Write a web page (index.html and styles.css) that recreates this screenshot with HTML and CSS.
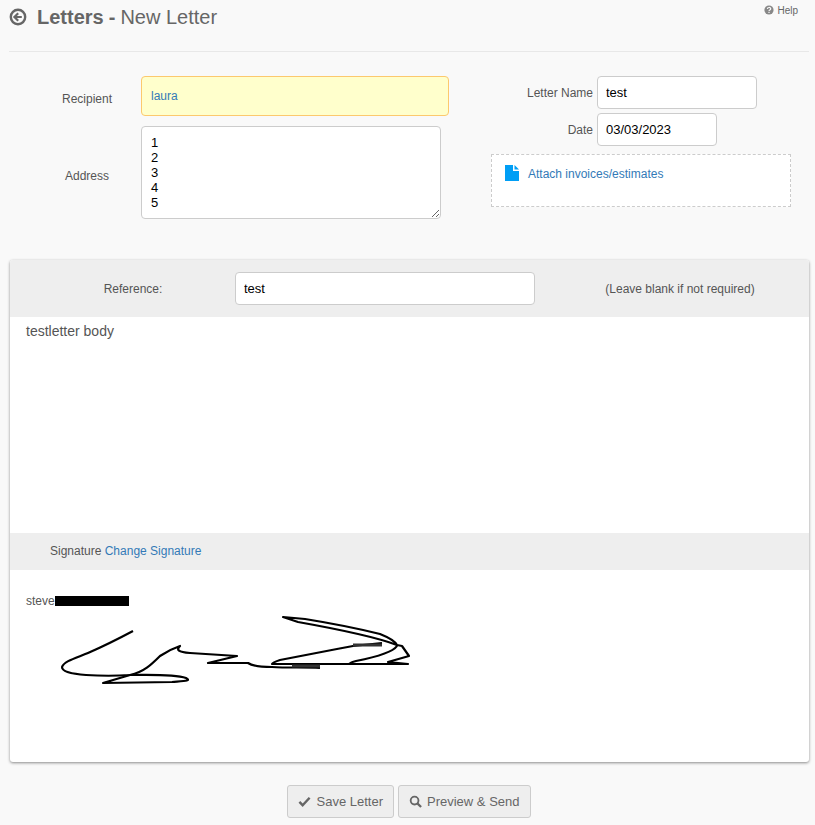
FILE: index.html
```html
<!DOCTYPE html>
<html lang="en">
<head>
    <meta charset="UTF-8">
    <title>Letters - New Letter</title>
    <link rel="stylesheet" href="styles.css">
</head>
<body>
    <div class="page">
        <header class="page-head">
            <h1 class="title">
                <svg class="back-icon" viewBox="0 0 18 18">
                    <circle cx="9" cy="9" r="7.2" fill="none" stroke="#666" stroke-width="2.4"/>
                    <path d="M9.2 5.2 5.4 9l3.8 3.8M5.8 9h7" fill="none" stroke="#666" stroke-width="2.2"/>
                </svg>
                <strong>Letters</strong> <b class="dash">-</b> New Letter
            </h1>
            <a class="help" href="#">
                <svg class="help-icon" viewBox="0 0 10 10">
                    <circle cx="5" cy="5" r="4.6" fill="#888"/>
                    <path d="M3.4 4c0-2 3.3-2 3.3-.2C6.700 5 5 4.800 5 6" fill="none" stroke="#f9f9f9" stroke-width="1.200"/>
                    <rect x="4.400" y="6.800" width="1.200" height="1.200" fill="#f9f9f9"/>
                </svg>
                Help
            </a>
        </header>

        <div class="letter-form">
            <div class="form-left">
                <label class="left-label">Recipient</label>
                <div class="recipient">laura</div>
                <label class="left-label">Address</label>
                <textarea class="address">1
2
3
4
5</textarea>
            </div>
            <div class="form-right">
                <div class="field-row">
                    <label>Letter Name</label>
                    <input class="text-input name-input" type="text" value="test">
                </div>
                <div class="field-row">
                    <label>Date</label>
                    <input class="text-input date-input" type="text" value="03/03/2023">
                </div>
                <div class="attach-box">
                    <svg class="file-icon" viewBox="0 0 14 16">
                        <path d="M0 0h8v6h6v10H0z" fill="#009ef5"/>
                        <path d="M9.500 0 14 4.500H9.500z" fill="#009ef5"/>
                    </svg>
                    <a href="#">Attach invoices/estimates</a>
                </div>
            </div>
        </div>

        <div class="letter-card">
            <div class="reference-bar">
                <label class="reference-label">Reference:</label>
                <input class="text-input reference-input" type="text" value="test">
                <span class="reference-note">(Leave blank if not required)</span>
            </div>
            <div class="letter-body">testletter body</div>
            <div class="signature-bar">Signature <a href="#">Change Signature</a></div>
            <div class="signature-body">
                <p class="signer">steve<span class="redacted"></span></p>
                <svg class="signature" viewBox="0 0 400 90" width="400" height="90">
                    <!-- origin is at 26,610 on the page -->
                    <path d="M107 21C92 29 78 36 62 43 50 48 38 51 36 57 36 62 46 64 60 65 75 66 90 66 104 65 118 62 126 54 134 46 140 42 148 38 154 36 150 40 152 42 164 43L211 46 182 53 222 53C226 56 232 57 246 57 262 58 280 57 294 58"/>
                    <path d="M104 65C125 65 148 64 160 68 166 71 158 71 146 72L77 73Z"/>
                    <path d="M257 7 279 9C310 14 330 18 354 24 364 28 369 31 371 35 350 27 300 17 272 12ZM371 36C367 42 350 47 330 51 326 52 324 53 323 54M356 33 327 36C300 41 270 47 254 50 248 52 246 53 246 54H382L362 52 383 46 376 36 371 35"/>
                    <path class="thick" d="M327 35H356M266 56H294"/>
                </svg>
            </div>
        </div>

        <div class="actions">
            <button class="btn" type="button">
                <svg class="btn-icon" viewBox="0 0 14 12">
                    <path d="M1.500 6.500 5 10l7.500-8" fill="none" stroke="#666" stroke-width="2.600"/>
                </svg>
                Save Letter
            </button>
            <button class="btn btn-preview" type="button">
                <svg class="btn-icon" viewBox="0 0 14 14">
                    <circle cx="6" cy="6" r="4.200" fill="none" stroke="#666" stroke-width="2"/>
                    <path d="M9 9l4 4" stroke="#666" stroke-width="2.400"/>
                </svg>
                Preview &amp; Send
            </button>
        </div>
    </div>
</body>
</html>
```

FILE: styles.css
```css
body {
    font-family: "Liberation Sans", Arial, sans-serif;
    font-size: 12px;
    margin: 0;
    padding: 0;
    background-color: #f9f9f9;
    color: #555;
}
a {
    color: #337ab7;
    text-decoration: none;
}
.page {
    width: 800px;
    margin-left: 9px;
}
.page-head {
    display: flex;
    justify-content: space-between;
    height: 51px;
    border-bottom: 1px solid #e8e8e8;
}
.title {
    display: flex;
    align-items: center;
    gap: 5px;
    height: 34px;
    margin: 0;
    font-size: 20px;
    font-weight: normal;
    color: #666;
}
.title strong, .title .dash {
    font-weight: bold;
}
.back-icon {
    width: 18px;
    height: 18px;
    margin-right: 5px;
}
.help {
    display: flex;
    align-items: center;
    gap: 3px;
    height: 10px;
    margin: 5px 11px 0 0;
    font-size: 10px;
    color: #666;
}
.help-icon {
    width: 10px;
    height: 10px;
}
.letter-form {
    display: flex;
    margin-top: 24px;
}
.form-left {
    display: grid;
    grid-template-columns: 132px 308px;
    row-gap: 10px;
    align-items: start;
}
.left-label {
    align-self: center;
    padding: 6px 0 0 24px;
    text-align: center;
}
.recipient {
    height: 38px;
    line-height: 38px;
    padding-left: 9px;
    background: #ffffcc;
    border: 1px solid #fcc96e;
    border-radius: 4px;
    color: #337ab7;
}
.address {
    display: block;
    box-sizing: border-box;
    width: 300px;
    height: 93px;
    margin: 0;
    padding: 8px 9px;
    font-family: "Liberation Sans", Arial, sans-serif;
    font-size: 13px;
    color: #000;
    background: #fff;
    border: 1px solid #ccc;
    border-radius: 4px;
}
.form-right {
    margin-left: 42px;
    width: 300px;
}
.field-row {
    display: flex;
    align-items: center;
    margin-bottom: 4px;
}
.field-row label {
    width: 102px;
    margin-right: 4px;
    text-align: right;
}
.text-input {
    box-sizing: border-box;
    height: 33px;
    margin: 0;
    padding: 0 8px;
    font-family: "Liberation Sans", Arial, sans-serif;
    font-size: 13px;
    color: #000;
    background: #fff;
    border: 1px solid #ccc;
    border-radius: 4px;
}
.name-input {
    width: 160px;
}
.date-input {
    width: 120px;
}
.attach-box {
    box-sizing: border-box;
    display: flex;
    align-items: flex-start;
    height: 53px;
    margin-top: 8px;
    padding: 10px 13px;
    background: #fff;
    border: 1px dashed #ccc;
}
.attach-box a {
    margin: 2px 0 0 9px;
}
.file-icon {
    width: 14px;
    height: 16px;
}
.letter-card {
    margin: 41px 0 0 1px;
    height: 502px;
    background: #fff;
    border-radius: 3px;
    box-shadow: 0 1px 3px rgba(0, 0, 0, 0.45);
}
.reference-bar {
    display: flex;
    align-items: center;
    height: 57px;
    background: #eee;
    border-radius: 3px 3px 0 0;
}
.reference-label {
    box-sizing: border-box;
    width: 225px;
    padding-left: 21px;
    text-align: center;
}
.reference-input {
    width: 300px;
}
.reference-note {
    flex: 1;
    padding-left: 16px;
    text-align: center;
}
.letter-body {
    height: 204px;
    padding: 6px 16px;
    font-size: 14px;
}
.signature-bar {
    height: 37px;
    line-height: 37px;
    padding-left: 40px;
    background: #eee;
}
.signature-body {
    padding: 25px 16px 0;
}
.signer {
    display: flex;
    align-items: center;
    height: 12px;
    margin: 0;
}
.redacted {
    width: 74px;
    height: 10px;
    background: #000;
}
.signature {
    display: block;
    margin-top: 3px;
}
.signature path {
    fill: none;
    stroke: #000;
    stroke-width: 2.2;
    stroke-linejoin: round;
}
.signature .thick {
    stroke: #333;
    stroke-width: 3;
}
.actions {
    display: flex;
    justify-content: center;
    gap: 4px;
    margin-top: 23px;
    padding-right: 1px;
}
.btn {
    display: flex;
    align-items: center;
    gap: 6px;
    height: 33px;
    padding: 0 10px;
    font-family: "Liberation Sans", Arial, sans-serif;
    font-size: 13px;
    color: #666;
    background: #eee;
    border: 1px solid #ccc;
    border-radius: 3px;
}
.btn-preview {
    gap: 5px;
}
.btn-icon {
    width: 13px;
    height: 13px;
}
```
